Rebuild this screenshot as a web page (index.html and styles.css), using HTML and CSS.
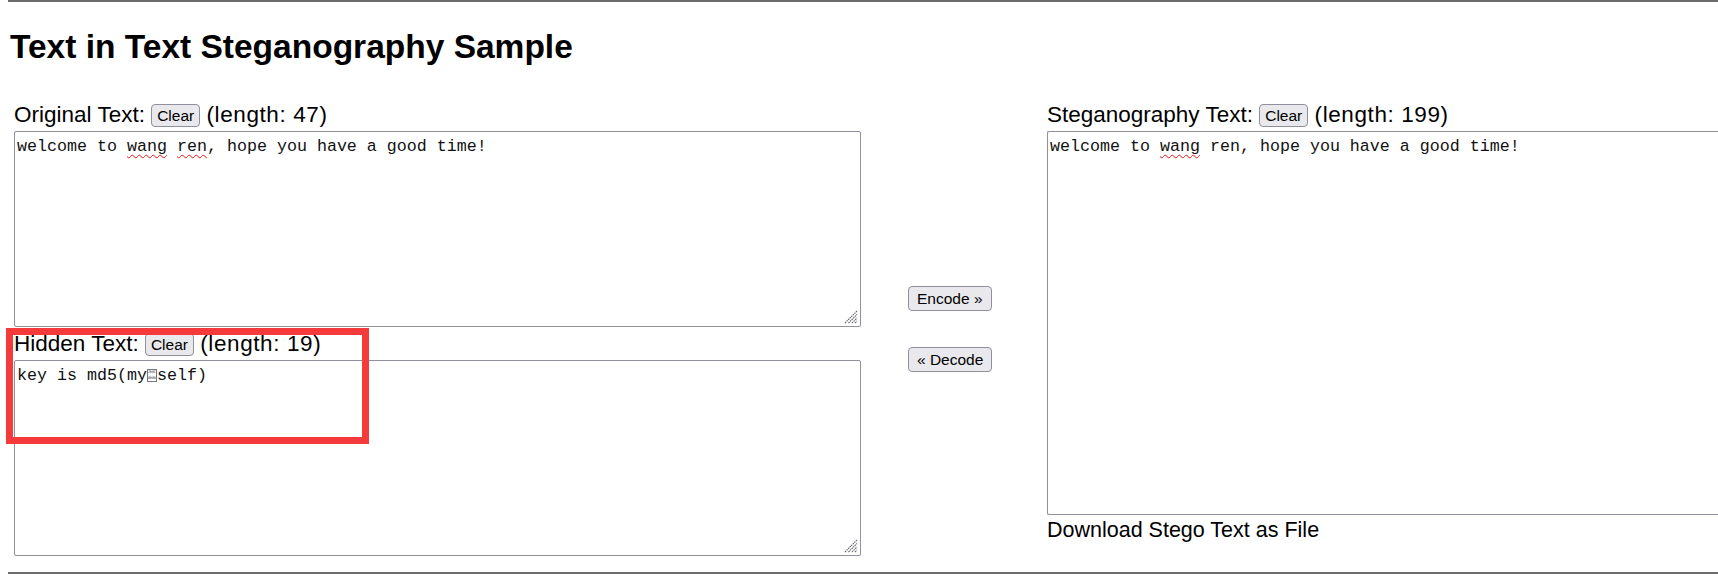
FILE: index.html
```html
<!DOCTYPE html>
<html lang="en">
<head>
<meta charset="utf-8">
<title>Text in Text Steganography Sample</title>
<link rel="stylesheet" href="styles.css">
</head>
<body>
<div class="page">
  <hr class="rule rule-top">
  <h1 class="title">Text in Text Steganography Sample</h1>
  <div class="main">
    <div class="col col-left">
      <div class="field-label">Original Text: <button class="btn">Clear</button> <span class="count">(length: 47)</span></div>
      <div class="textbox tb-half">welcome to <span class="misspelled">wang</span> <span class="misspelled">ren</span>, hope you have a good time!<svg class="grip" width="14" height="14" viewBox="0 0 14 14"><path d="M1 13L13 1M4.5 13L13 4.5M8 13L13 8M11 13L13 11" stroke="#6a6a6a" stroke-width="1.1" stroke-dasharray="1.6 0.6" fill="none"/></svg></div>
      <div class="field-label field-label-second">Hidden Text: <button class="btn">Clear</button> <span class="count">(length: 19)</span></div>
      <div class="textbox tb-half">key is md5(my<span class="tofu"><span class="tofu-grid"><span>20</span><span>0C</span><span>00</span><span>00</span></span></span>self)<svg class="grip" width="14" height="14" viewBox="0 0 14 14"><path d="M1 13L13 1M4.5 13L13 4.5M8 13L13 8M11 13L13 11" stroke="#6a6a6a" stroke-width="1.1" stroke-dasharray="1.6 0.6" fill="none"/></svg></div>
      <div class="highlight-box"></div>
    </div>
    <div class="col col-mid">
      <button class="btn btn-wide">Encode »</button>
      <button class="btn btn-wide">« Decode</button>
    </div>
    <div class="col col-right">
      <div class="field-label">Steganography Text: <button class="btn">Clear</button> <span class="count">(length: 199)</span></div>
      <div class="textbox tb-full">welcome to <span class="misspelled">wang</span> ren, hope you have a good time!</div>
      <div class="download">Download Stego Text as File</div>
    </div>
  </div>
  <hr class="rule rule-bottom">
</div>
</body>
</html>
```
FILE: styles.css
```css
html {
  overflow: hidden;
  background: #ffffff;
}

body {
  margin: 0;
  font-family: "Liberation Sans", Arial, sans-serif;
  color: #000;
}

.page {
  margin: 0 0 0 8px;
}

.rule {
  height: 0;
  margin: 0;
  border: none;
  border-top: 2px solid #6c6c6c;
}

.title {
  margin: 26px 0 0 2px;
  font-size: 33.5px;
  line-height: 38px;
  font-weight: bold;
}

.main {
  display: flex;
  align-items: stretch;
  margin-top: 36px;
  padding-left: 6px;
}

.col {
  flex: none;
}

.col-left {
  position: relative;
  width: 847px;
}

.col-mid {
  width: 186px;
  padding-left: 47px;
  box-sizing: border-box;
  display: flex;
  flex-direction: column;
  justify-content: center;
  align-items: flex-start;
  gap: 36px;
}

.col-right {
  width: 800px;
}

.field-label {
  height: 25px;
  line-height: 25px;
  font-size: 22.5px;
  margin-bottom: 4px;
  white-space: nowrap;
}

.field-label-second {
  margin-top: 4px;
  margin-bottom: 4px;
}

.count {
  letter-spacing: 0.6px;
}

.btn {
  display: inline-block;
  vertical-align: 1px;
  font-family: "Liberation Sans", Arial, sans-serif;
  font-size: 15.5px;
  line-height: 19px;
  padding: 1px 5px;
  color: #000;
  background: #e9e9ed;
  border: 1px solid #8f8f9d;
  border-radius: 4px;
}

.btn-wide {
  padding: 2px 8px;
}

.textbox {
  position: relative;
  box-sizing: border-box;
  border: 1px solid #8f8f9d;
  border-radius: 2px;
  background: #fff;
  padding: 5px 2px 3px;
  font-family: "Liberation Mono", "Courier New", monospace;
  font-size: 16.67px;
  line-height: 20px;
  white-space: pre-wrap;
  overflow: hidden;
  color: #111;
}

.tb-half {
  height: 196px;
}

.tb-full {
  height: 384px;
  border-right: none;
}

.misspelled {
  text-decoration: underline wavy #e4141b;
  text-decoration-thickness: 1px;
  text-underline-offset: 3px;
}

.tofu {
  display: inline-block;
  box-sizing: border-box;
  width: 10px;
  height: 13px;
  border: 1px solid #777;
  vertical-align: -2px;
  overflow: hidden;
}

.tofu-grid {
  display: grid;
  grid-template-columns: 4px 4px;
  grid-template-rows: 5px 5px;
  gap: 1px 0;
  font-family: "DejaVu Sans Mono", monospace;
  font-size: 3.5px;
  line-height: 5px;
  color: #333;
  letter-spacing: -0.3px;
}

.grip {
  position: absolute;
  right: 2px;
  bottom: 2px;
}

.highlight-box {
  position: absolute;
  left: -8px;
  top: 226px;
  width: 363px;
  height: 116px;
  box-sizing: border-box;
  border: 7px solid #f53a3c;
}

.download {
  margin-top: 3px;
  font-size: 21.5px;
  line-height: 25px;
  white-space: nowrap;
}

.rule-bottom {
  margin-top: 16px;
}
```
